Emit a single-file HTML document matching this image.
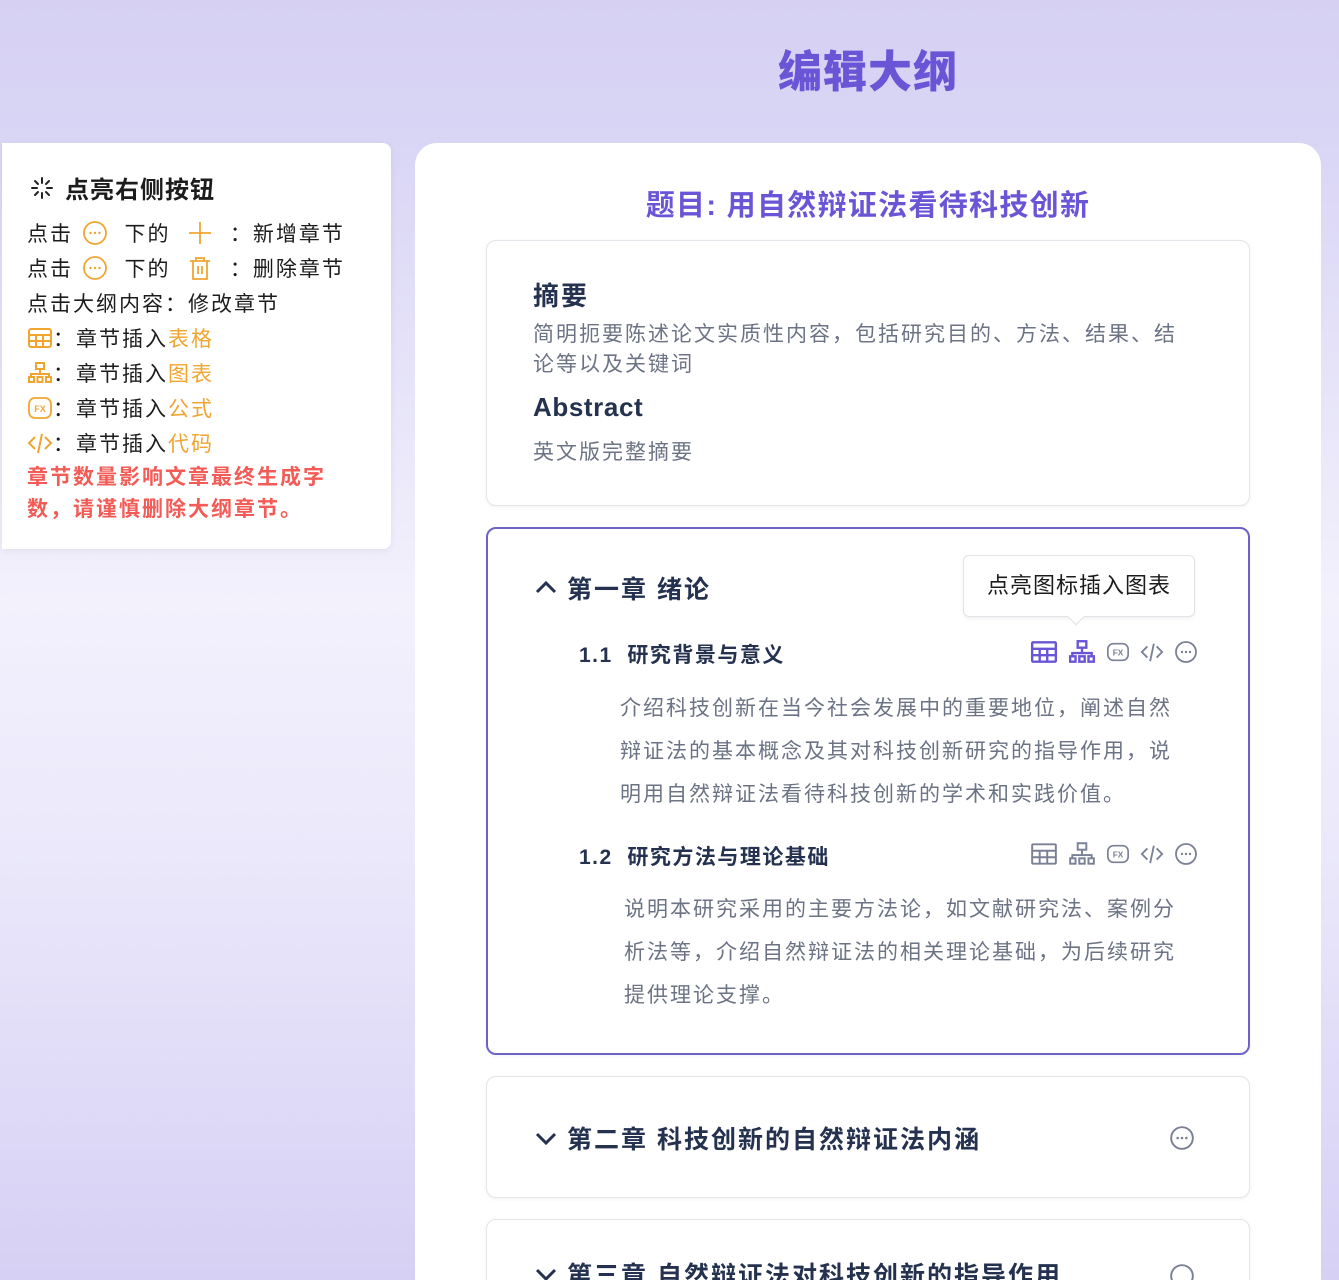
<!DOCTYPE html>
<html><head><meta charset="utf-8"><style>
*{margin:0;padding:0;box-sizing:border-box}
html,body{width:1339px;height:1280px;overflow:hidden}
body{position:relative;font-family:"Liberation Sans","Noto Sans CJK SC",sans-serif;letter-spacing:2px;
background:linear-gradient(180deg,#d6d1f3 0px,#d9d5f5 140px,#f3f1fc 600px,#ebe8fb 850px,#d6d0f4 1280px);}
.abs{position:absolute}
h1{position:absolute;left:0;width:1339px;padding-left:397px;text-align:center;top:36px;font-size:44px;color:#6a55d6;font-weight:900;letter-spacing:1px}
.tip{left:2px;top:143px;width:389px;height:406px;background:#fff;border-radius:0 8px 8px 0;box-shadow:0 2px 8px rgba(0,0,0,.06)}
.row{position:absolute;left:27px;font-size:21px;color:#1c1c1c;white-space:nowrap;display:flex;align-items:center}
.or{color:#f0a531}
.red{position:absolute;left:27px;top:462px;font-size:21px;font-weight:700;color:#f35b57;line-height:32px}
.main{left:415px;top:143px;width:906px;height:1200px;background:#fff;border-radius:22px}
.card{position:absolute;left:486px;width:764px;background:#fff;border:1.5px solid #e4e4ea;border-radius:10px;box-shadow:0 1px 4px rgba(0,0,0,.05)}
.dk{color:#243250;font-weight:700}
.gr{color:#6b7384}
.ic{display:inline-block;vertical-align:middle}
</style></head><body>
<h1>编辑大纲</h1>

<div class="abs tip"></div>
<div class="abs" style="left:29px;top:170px;font-size:24px;font-weight:700;color:#1c1c1c;display:flex;align-items:center;letter-spacing:1px">
<svg width="26" height="26" viewBox="0 0 26 26" stroke="#222" stroke-width="2" stroke-linecap="round"><path d="M13 3v5M13 18v5M3 13h5M18 13h5M6 6l3 3M17 17l3 3M20 6l-3 3M9 17l-3 3"/></svg>
<span style="margin-left:10px">点亮右侧按钮</span></div>
<div class="row" style="top:218px">点击&nbsp;<svg class="ic" width="28" height="28" viewBox="0 0 28 28"><circle cx="14" cy="14" r="11" fill="none" stroke="#f0a531" stroke-width="1.8"/><circle cx="9.5" cy="14" r="1.2" fill="#f0a531"/><circle cx="14" cy="14" r="1.2" fill="#f0a531"/><circle cx="18.5" cy="14" r="1.2" fill="#f0a531"/></svg>&nbsp;&nbsp;下的&nbsp;&nbsp;<svg width="28" height="28" viewBox="0 0 28 28" stroke="#f0a531" stroke-width="1.8"><path d="M14 3v22M3 14h22"/></svg>&nbsp;&nbsp;：新增章节</div>
<div class="row" style="top:253px">点击&nbsp;<svg class="ic" width="28" height="28" viewBox="0 0 28 28"><circle cx="14" cy="14" r="11" fill="none" stroke="#f0a531" stroke-width="1.8"/><circle cx="9.5" cy="14" r="1.2" fill="#f0a531"/><circle cx="14" cy="14" r="1.2" fill="#f0a531"/><circle cx="18.5" cy="14" r="1.2" fill="#f0a531"/></svg>&nbsp;&nbsp;下的&nbsp;&nbsp;<svg width="28" height="28" viewBox="0 0 28 28" fill="none" stroke="#f0a531" stroke-width="1.8"><path d="M4 7h20M10 7V4h8v3M7 7v18h14V7M12 12v8M16 12v8"/></svg>&nbsp;&nbsp;：删除章节</div>
<div class="row" style="top:288px">点击大纲内容：修改章节</div>
<div class="row" style="top:323px"><svg width="26" height="24" viewBox="0 0 26 24" fill="none" stroke="#f0a531" stroke-width="2"><rect x="2" y="3" width="22" height="18" rx="2"/><path d="M2 9h22M2 15h22M9 9v12M16 9v12"/></svg>：章节插入<span class="or">表格</span></div>
<div class="row" style="top:358px"><svg width="26" height="24" viewBox="0 0 26 24" fill="none" stroke="#f0a531" stroke-width="2"><rect x="9" y="2" width="8" height="6"/><path d="M13 8v5M4 16v-3h18v3"/><rect x="2" y="16" width="5" height="5"/><rect x="10.5" y="16" width="5" height="5"/><rect x="19" y="16" width="5" height="5"/></svg>：章节插入<span class="or">图表</span></div>
<div class="row" style="top:393px"><svg width="26" height="24" viewBox="0 0 26 24"><rect x="2" y="2" width="22" height="20" rx="6" fill="none" stroke="#f0a531" stroke-width="1.8"/><text x="13" y="16" font-size="9" text-anchor="middle" fill="#f0a531" font-family="Liberation Sans" font-weight="700" letter-spacing="0">FX</text></svg>：章节插入<span class="or">公式</span></div>
<div class="row" style="top:428px"><svg width="26" height="24" viewBox="0 0 26 24" fill="none" stroke="#f0a531" stroke-width="2"><path d="M8 6l-6 6 6 6M18 6l6 6-6 6M15 3l-4 19"/></svg>：章节插入<span class="or">代码</span></div>
<div class="red">章节数量影响文章最终生成字<br>数，请谨慎删除大纲章节。</div>

<div class="abs main"></div>
<div class="abs" style="left:415px;width:906px;top:182px;text-align:center;font-size:29px;font-weight:700;color:#6a55d6;letter-spacing:1.3px">题目: 用自然辩证法看待科技创新</div>

<div class="card" style="top:240px;height:266px"></div>
<div class="abs dk" style="left:533px;top:276px;font-size:26px">摘要</div>
<div class="abs gr" style="left:533px;top:320px;font-size:21px;line-height:30px;width:662px">简明扼要陈述论文实质性内容，包括研究目的、方法、结果、结论等以及关键词</div>
<div class="abs dk" style="left:533px;top:392px;font-size:26px;letter-spacing:0.6px">Abstract</div>
<div class="abs gr" style="left:533px;top:436px;font-size:21px">英文版完整摘要</div>

<div class="card" style="top:527px;height:528px;border:2px solid #6d62c6"></div>
<div class="abs dk" style="left:533px;top:570px;font-size:25px;display:flex;align-items:center"><svg width="26" height="22" viewBox="0 0 26 22" fill="none" stroke="#243250" stroke-width="3"><path d="M4 15l9-9 9 9"/></svg><span style="margin-left:8px">第一章&nbsp;绪论</span></div>
<div class="abs" style="left:963px;top:555px;width:232px;height:62px;border:1.5px solid #e2e2e8;border-radius:6px;background:#fff;font-size:22px;color:#1c1c1c;text-align:center;line-height:60px;letter-spacing:1px;box-shadow:0 2px 5px rgba(0,0,0,.05)">点亮图标插入图表</div>
<div class="abs" style="left:1070px;top:611px;width:12px;height:12px;background:#fff;border-right:1.5px solid #e2e2e8;border-bottom:1.5px solid #e2e2e8;transform:rotate(45deg)"></div>

<div class="abs dk" style="left:579px;top:639px;font-size:21px;letter-spacing:1.5px">1.1&nbsp;&nbsp;研究背景与意义</div>
<div class="abs" style="left:1030px;top:639px;display:flex;gap:10px;align-items:center">
<svg width="28" height="26" viewBox="0 0 26 24" fill="none" stroke="#6a55d6" stroke-width="2.2"><rect x="2" y="3" width="22" height="18" rx="1"/><path d="M2 9h22M2 15h22M9 9v12M16 9v12"/></svg>
<svg width="28" height="26" viewBox="0 0 26 24" fill="none" stroke="#6a55d6" stroke-width="2.2"><rect x="9" y="2" width="8" height="6"/><path d="M13 8v5M4 16v-3h18v3"/><rect x="2" y="16" width="5" height="5"/><rect x="10.5" y="16" width="5" height="5"/><rect x="19" y="16" width="5" height="5"/></svg>
<svg width="24" height="24" viewBox="0 0 26 24"><rect x="2" y="3" width="22" height="18" rx="6" fill="none" stroke="#7a8196" stroke-width="1.8"/><text x="13" y="16" font-size="9" text-anchor="middle" fill="#7a8196" font-family="Liberation Sans" font-weight="700" letter-spacing="0">FX</text></svg>
<svg width="24" height="24" viewBox="0 0 26 24" fill="none" stroke="#7a8196" stroke-width="2"><path d="M8 6l-6 6 6 6M18 6l6 6-6 6M15 3l-4 19"/></svg>
<svg width="24" height="24" viewBox="0 0 24 24"><circle cx="12" cy="12" r="10" fill="none" stroke="#7a8196" stroke-width="1.8"/><circle cx="8" cy="12" r="1.2" fill="#7a8196"/><circle cx="12" cy="12" r="1.2" fill="#7a8196"/><circle cx="16" cy="12" r="1.2" fill="#7a8196"/></svg>
</div>
<div class="abs gr" style="left:620px;top:687px;font-size:21px;line-height:43px;width:572px">介绍科技创新在当今社会发展中的重要地位，阐述自然辩证法的基本概念及其对科技创新研究的指导作用，说明用自然辩证法看待科技创新的学术和实践价值。</div>

<div class="abs dk" style="left:579px;top:841px;font-size:21px;letter-spacing:1.5px">1.2&nbsp;&nbsp;研究方法与理论基础</div>
<div class="abs" style="left:1030px;top:841px;display:flex;gap:10px;align-items:center">
<svg width="28" height="26" viewBox="0 0 26 24" fill="none" stroke="#7a8196" stroke-width="1.8"><rect x="2" y="3" width="22" height="18" rx="1"/><path d="M2 9h22M2 15h22M9 9v12M16 9v12"/></svg>
<svg width="28" height="26" viewBox="0 0 26 24" fill="none" stroke="#7a8196" stroke-width="1.8"><rect x="9" y="2" width="8" height="6"/><path d="M13 8v5M4 16v-3h18v3"/><rect x="2" y="16" width="5" height="5"/><rect x="10.5" y="16" width="5" height="5"/><rect x="19" y="16" width="5" height="5"/></svg>
<svg width="24" height="24" viewBox="0 0 26 24"><rect x="2" y="3" width="22" height="18" rx="6" fill="none" stroke="#7a8196" stroke-width="1.8"/><text x="13" y="16" font-size="9" text-anchor="middle" fill="#7a8196" font-family="Liberation Sans" font-weight="700" letter-spacing="0">FX</text></svg>
<svg width="24" height="24" viewBox="0 0 26 24" fill="none" stroke="#7a8196" stroke-width="2"><path d="M8 6l-6 6 6 6M18 6l6 6-6 6M15 3l-4 19"/></svg>
<svg width="24" height="24" viewBox="0 0 24 24"><circle cx="12" cy="12" r="10" fill="none" stroke="#7a8196" stroke-width="1.8"/><circle cx="8" cy="12" r="1.2" fill="#7a8196"/><circle cx="12" cy="12" r="1.2" fill="#7a8196"/><circle cx="16" cy="12" r="1.2" fill="#7a8196"/></svg>
</div>
<div class="abs gr" style="left:624px;top:888px;font-size:21px;line-height:43px;width:572px">说明本研究采用的主要方法论，如文献研究法、案例分析法等，介绍自然辩证法的相关理论基础，为后续研究提供理论支撑。</div>

<div class="card" style="top:1076px;height:122px"></div>
<div class="abs dk" style="left:533px;top:1120px;font-size:25px;display:flex;align-items:center"><svg width="26" height="22" viewBox="0 0 26 22" fill="none" stroke="#243250" stroke-width="3"><path d="M4 7l9 9 9-9"/></svg><span style="margin-left:8px">第二章&nbsp;科技创新的自然辩证法内涵</span></div>
<svg class="abs" style="left:1169px;top:1125px" width="26" height="26" viewBox="0 0 24 24"><circle cx="12" cy="12" r="10" fill="none" stroke="#7a8196" stroke-width="1.8"/><circle cx="8" cy="12" r="1.2" fill="#7a8196"/><circle cx="12" cy="12" r="1.2" fill="#7a8196"/><circle cx="16" cy="12" r="1.2" fill="#7a8196"/></svg>

<div class="card" style="top:1219px;height:120px"></div>
<div class="abs dk" style="left:533px;top:1256px;font-size:25px;display:flex;align-items:center"><svg width="26" height="22" viewBox="0 0 26 22" fill="none" stroke="#243250" stroke-width="3"><path d="M4 7l9 9 9-9"/></svg><span style="margin-left:8px">第三章&nbsp;自然辩证法对科技创新的指导作用</span></div>
<svg class="abs" style="left:1169px;top:1263px" width="26" height="26" viewBox="0 0 24 24"><circle cx="12" cy="12" r="10" fill="none" stroke="#7a8196" stroke-width="1.8"/></svg>
</body></html>
